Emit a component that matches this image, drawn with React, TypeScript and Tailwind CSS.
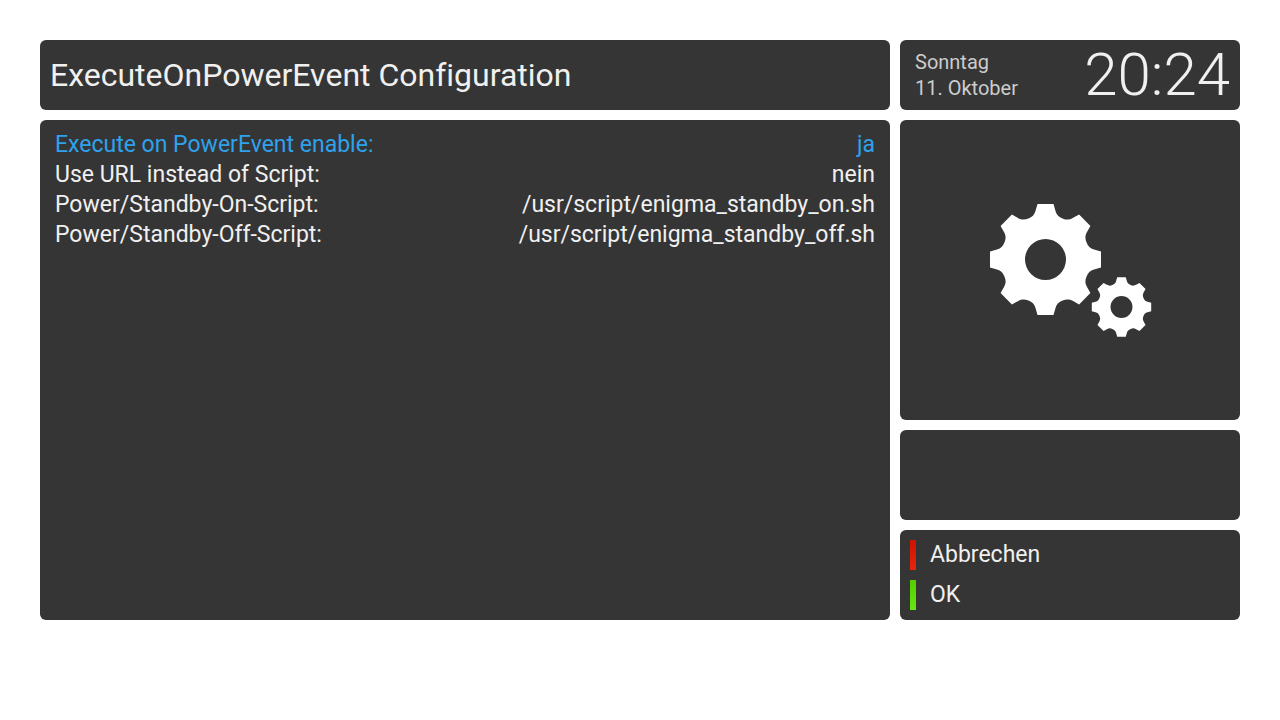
import { useState } from 'react'

type Setting = {
  id: string
  label: string
  value: string
  options?: string[]
}

const initialSettings: Setting[] = [
  { id: 'enable', label: 'Execute on PowerEvent enable:', value: 'ja', options: ['ja', 'nein'] },
  { id: 'useUrl', label: 'Use URL instead of Script:', value: 'nein', options: ['ja', 'nein'] },
  { id: 'onScript', label: 'Power/Standby-On-Script:', value: '/usr/script/enigma_standby_on.sh' },
  { id: 'offScript', label: 'Power/Standby-Off-Script:', value: '/usr/script/enigma_standby_off.sh' },
]

// one tooth: flat tip, then the notch up to the next tooth
const TOOTH = [
  [8, -55.5],
  [10, -48.5],
  [11.2, -44.5],
  [13.3, -42.6],
  [17, -41.1],
  [20.7, -39.5],
  [23.6, -39.4],
  [27.2, -41.4],
  [33.6, -44.9],
]

function gearPath() {
  let d = 'M-8 -55.5'
  for (let i = 0; i < 8; i++) {
    const a = (i * Math.PI) / 4
    const p = TOOTH.map(([x, y]) =>
      `${(x * Math.cos(a) - y * Math.sin(a)).toFixed(2)} ${(x * Math.sin(a) + y * Math.cos(a)).toFixed(2)}`
    )
    d += `L${p[0]}L${p[1]}C${p[2]} ${p[3]} ${p[4]}C${p[5]} ${p[6]} ${p[7]}L${p[8]}`
  }
  // center hole
  return d + 'ZM20.5 0A20.5 20.5 0 1 0 -20.5 0A20.5 20.5 0 1 0 20.5 0Z'
}

const GEAR = gearPath()

function Gears() {
  return (
    <svg width="164" height="136" viewBox="0 0 164 136" fill="#ffffff" fillRule="evenodd" aria-hidden="true">
      <path d={GEAR} transform="translate(57.5 57.5)" />
      <path d={GEAR} transform="translate(133.5 105) scale(0.535)" />
    </svg>
  )
}

export default function App() {
  const [settings, setSettings] = useState(initialSettings)
  const [active, setActive] = useState('enable')

  const update = (id: string, value: string) =>
    setSettings(settings.map((s) => (s.id === id ? { ...s, value } : s)))

  return (
    <div className="min-h-screen bg-white p-10 font-['Roboto',sans-serif] text-[#f0f0f0] [font-variant-ligatures:none]">
      <div className="grid grid-cols-[1fr_340px] gap-2.5">
        <header className="flex h-[70px] items-center rounded-md bg-[#353535] px-2.5">
          <h1 className="text-[32px] leading-10">ExecuteOnPowerEvent Configuration</h1>
        </header>

        <div className="flex h-[70px] items-center justify-between rounded-md bg-[#353535] pr-2.5 pl-[15px]">
          <div className="text-xl leading-[26px] text-[#cccccc]">
            <p>Sonntag</p>
            <p>11. Oktober</p>
          </div>
          <time className="text-[60px] leading-[72px] font-light">20:24</time>
        </div>

        <main className="rounded-md bg-[#353535] px-[15px] py-2.5">
          {settings.map((s) => (
            <div
              key={s.id}
              onFocus={() => setActive(s.id)}
              className={`flex h-[30px] items-center justify-between text-[23px] leading-[30px] ${
                s.id === active ? 'text-[#2ea2ec]' : ''
              }`}
            >
              <label htmlFor={s.id}>{s.label}</label>
              {s.options ? (
                <select
                  id={s.id}
                  value={s.value}
                  onChange={(e) => update(s.id, e.target.value)}
                  className="appearance-none bg-transparent text-right outline-none [text-align-last:right]"
                >
                  {s.options.map((o) => (
                    <option key={o}>{o}</option>
                  ))}
                </select>
              ) : (
                <input
                  id={s.id}
                  type="text"
                  value={s.value}
                  onChange={(e) => update(s.id, e.target.value)}
                  className="min-w-0 flex-1 bg-transparent text-right outline-none"
                />
              )}
            </div>
          ))}
        </main>

        <aside className="flex flex-col gap-2.5">
          <div className="flex h-[300px] items-center justify-center rounded-md bg-[#353535]">
            <Gears />
          </div>
          <div className="h-[90px] rounded-md bg-[#353535]" />
          <div className="flex flex-col gap-2.5 rounded-md bg-[#353535] p-2.5 text-[23px] leading-[30px]">
            <button type="button" className="flex items-center gap-3.5">
              <span className="h-[30px] w-1.5 bg-linear-to-b from-[#cc1400] to-[#e62410]" />
              Abbrechen
            </button>
            <button type="button" className="flex items-center gap-3.5">
              <span className="h-[30px] w-1.5 bg-linear-to-b from-[#55cc00] to-[#66e610]" />
              OK
            </button>
          </div>
        </aside>
      </div>
    </div>
  )
}
